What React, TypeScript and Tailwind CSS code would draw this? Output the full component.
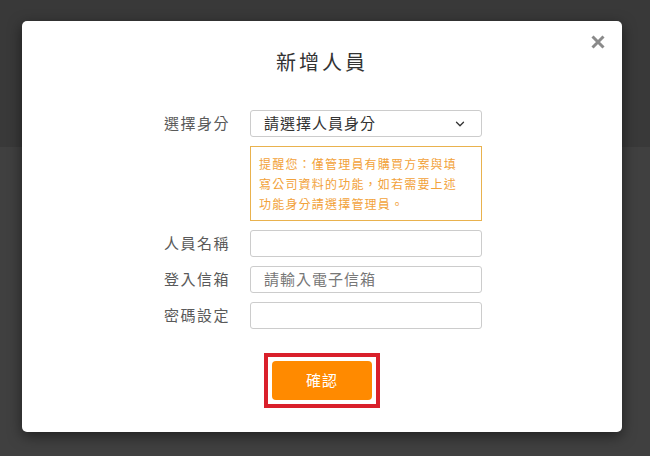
import React from 'react';
import { ChevronDown } from 'lucide-react';

const font = { fontFamily: '"Noto Sans CJK TC", "Noto Sans", sans-serif' };

const Row: React.FC<{ label: string; children: React.ReactNode }> = ({ label, children }) => (
  <div className="flex items-center">
    <div className="w-[208px] text-right text-[15px] tracking-[1.5px] text-[#5a5a5a]">{label}</div>
    <div className="ml-[20px] w-[232px]">{children}</div>
  </div>
);

export default function App() {
  return (
    <div className="relative w-[650px] h-[456px] overflow-hidden" style={font}>
      {/* 底層頁面 */}
      <div className="h-[147px] bg-[#393939]" />
      <div className="h-[309px] bg-[#404040]" />

      {/* 彈窗 */}
      <div className="absolute left-[22px] top-[21px] w-[600px] h-[411px] bg-white rounded-[5px] shadow-[0_4px_14px_rgba(0,0,0,0.5)] flex flex-col">
        <button className="absolute right-[17px] top-[14px] w-[14px] h-[14px]">
          <svg viewBox="0 0 14 14" width="14" height="14">
            <path d="M1.5 1.5 L12.5 12.5 M12.5 1.5 L1.5 12.5" stroke="#8a8a8a" strokeWidth="3" strokeLinecap="butt" />
          </svg>
        </button>

        <h2 className="mt-[27px] h-[28px] leading-[28px] text-center text-[20px] tracking-[3px] text-[#333]">新增人員</h2>

        <div className="mt-[34px] flex flex-col">
          <Row label="選擇身分">
            <div className="h-[27px] border border-[#ccc] rounded-[3px] flex items-center justify-between pl-[13px] pr-[14px] text-[15px] tracking-[1px] text-[#333]">
              <span>請選擇人員身分</span>
              <ChevronDown size={14} strokeWidth={2.25} className="text-[#333]" />
            </div>
          </Row>

          <div className="ml-[228px] mt-[9px] w-[232px] h-[75px] border border-[#e9b24e] px-[8px] pt-[7px] text-[12px] leading-[20px] tracking-[1.2px] text-[#f2a23a]">
            提醒您：僅管理員有購買方案與填
            <br />
            寫公司資料的功能，如若需要上述
            <br />
            功能身分請選擇管理員。
          </div>

          <div className="mt-[9px] flex flex-col gap-[9px]">
            <Row label="人員名稱">
              <div className="h-[27px] border border-[#ccc] rounded-[3px]" />
            </Row>
            <Row label="登入信箱">
              <div className="h-[27px] border border-[#ccc] rounded-[3px] flex items-center pl-[13px] text-[15px] tracking-[1px] text-[#777]">
                請輸入電子信箱
              </div>
            </Row>
            <Row label="密碼設定">
              <div className="h-[27px] border border-[#ccc] rounded-[3px]" />
            </Row>
          </div>
        </div>

        <div className="mt-[24px] flex justify-center">
          <div className="border-[4px] border-[#d9202b] p-[4px]">
            <button className="w-[100px] h-[39px] bg-[#ff8a00] rounded-[4px] text-white text-[15px] tracking-[1px]">確認</button>
          </div>
        </div>
      </div>
    </div>
  );
}
